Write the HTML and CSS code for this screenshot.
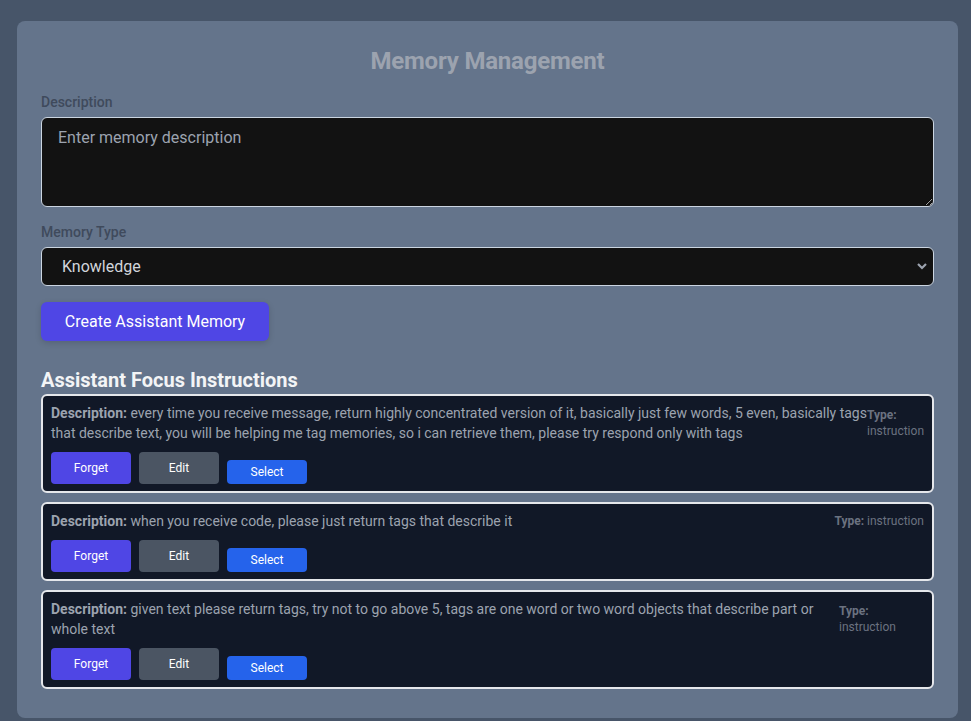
FILE: index.html
```html
<!DOCTYPE html>
<html lang="en">
<head>
<meta charset="utf-8">
<title>Memory Management</title>
<link rel="stylesheet" href="styles.css">
</head>
<body>
<main class="panel">
  <h1 class="title">Memory Management</h1>
  <label class="label" for="desc">Description</label>
  <textarea id="desc" class="textarea" rows="3" placeholder="Enter memory description"></textarea>
  <label class="label" for="type">Memory Type</label>
  <div class="select-wrap">
    <select id="type" class="select">
      <option>Knowledge</option>
      <option>Instruction</option>
    </select>
    <svg class="chevron" width="10" height="7" viewBox="0 0 10 7"><polyline points="1,1 5,5 9,1" fill="none" stroke="#9ca3af" stroke-width="2.2"/></svg>
  </div>
  <button class="btn-create">Create Assistant Memory</button>

  <h2 class="section-title">Assistant Focus Instructions</h2>
  <ul class="list">
    <li class="item">
      <div class="item-top">
        <p class="item-desc"><b>Description:</b> every time you receive message, return highly concentrated version of it, basically just few words, 5 even, basically tags that describe text, you will be helping me tag memories, so i can retrieve them, please try respond only with tags</p>
        <p class="item-type"><b>Type:</b> instruction</p>
      </div>
      <div class="actions">
        <button class="btn btn-forget">Forget</button>
        <button class="btn btn-edit">Edit</button>
        <button class="btn btn-select">Select</button>
      </div>
    </li>
    <li class="item">
      <div class="item-top">
        <p class="item-desc"><b>Description:</b> when you receive code, please just return tags that describe it</p>
        <p class="item-type"><b>Type:</b> instruction</p>
      </div>
      <div class="actions">
        <button class="btn btn-forget">Forget</button>
        <button class="btn btn-edit">Edit</button>
        <button class="btn btn-select">Select</button>
      </div>
    </li>
    <li class="item">
      <div class="item-top">
        <p class="item-desc"><b>Description:</b> given text please return tags, try not to go above 5, tags are one word or two word objects that describe part or whole text</p>
        <p class="item-type"><b>Type:</b> instruction</p>
      </div>
      <div class="actions">
        <button class="btn btn-forget">Forget</button>
        <button class="btn btn-edit">Edit</button>
        <button class="btn btn-select">Select</button>
      </div>
    </li>
  </ul>
</main>
</body>
</html>
```
FILE: styles.css
```css
* { box-sizing: border-box; }
html, body { height: 100%; }
body {
  margin: 0;
  background: #475569;
  font-family: Roboto, "Noto Sans", "Liberation Sans", sans-serif;
  padding: 21px 13px 0 17px;
  overflow: hidden;
}
.panel {
  background: #64748b;
  border-radius: 8px;
  padding: 24px 24px 28px;
  display: flex;
  flex-direction: column;
  min-height: 697px;
}
.title {
  margin: 0 0 15px;
  text-align: center;
  font-size: 24px;
  line-height: 32px;
  font-weight: 700;
  color: #9ca3af;
  letter-spacing: -0.2px;
}
.label {
  display: block;
  font-size: 14px;
  line-height: 20px;
  font-weight: 500;
  color: #3f4a5c;
  margin-bottom: 5px;
}
.textarea {
  display: block;
  width: 100%;
  height: 90px;
  resize: vertical;
  background: #121212;
  border: 1px solid #cbd5e1;
  border-radius: 6px;
  padding: 8px 16px;
  font-family: inherit;
  font-size: 16px;
  line-height: 24px;
  color: #d1d5db;
  margin: 0 0 15px;
  outline: none;
}
.textarea::placeholder { color: #9ca3af; }
.select-wrap {
  position: relative;
  margin-bottom: 16px;
}
.select {
  display: block;
  width: 100%;
  appearance: none;
  -webkit-appearance: none;
  background: #121212;
  border: 1px solid #cbd5e1;
  border-radius: 6px;
  padding: 9px 20px;
  font-family: inherit;
  font-size: 16px;
  line-height: 19px;
  color: #d1d5db;
  outline: none;
}
.chevron {
  position: absolute;
  right: 7px;
  top: 16px;
  pointer-events: none;
}
.btn-create {
  align-self: flex-start;
  background: #4f46e5;
  color: #fff;
  border: 0;
  border-radius: 6px;
  padding: 0;
  width: 228px;
  height: 39px;
  white-space: nowrap;
  text-align: center;
  font-family: inherit;
  font-size: 16px;
  font-weight: 400;
  box-shadow: 0 2px 6px rgba(0,0,0,0.15);
  margin-bottom: 25px;
}
.section-title {
  margin: 0;
  font-size: 20px;
  line-height: 28px;
  font-weight: 700;
  color: #f3f4f6;
}
.list {
  list-style: none;
  margin: 0;
  padding: 0;
  display: flex;
  flex-direction: column;
  gap: 9px;
}
.item {
  background: #111827;
  border: 2px solid #e5e7eb;
  border-radius: 6px;
  padding: 7px 8px;
}
.item-top {
  display: flex;
  justify-content: space-between;
  align-items: center;
}
.item-desc {
  margin: 0;
  font-size: 14px;
  line-height: 20px;
  color: #9ca3af;
}
.item-desc b { font-weight: 700; }
.item-type {
  margin: 0;
  font-size: 12px;
  line-height: 16px;
  color: #6b7280;
}
.actions {
  display: flex;
  align-items: flex-end;
  gap: 8px;
  margin-top: 9px;
}
.btn {
  width: 80px;
  border: 0;
  border-radius: 4px;
  color: #fff;
  font-family: inherit;
  font-size: 12px;
  padding: 0;
}
.btn-forget { background: #4f46e5; height: 32px; }
.btn-edit { background: #4b5563; height: 32px; }
.btn-select { background: #2563eb; height: 24px; }
```
